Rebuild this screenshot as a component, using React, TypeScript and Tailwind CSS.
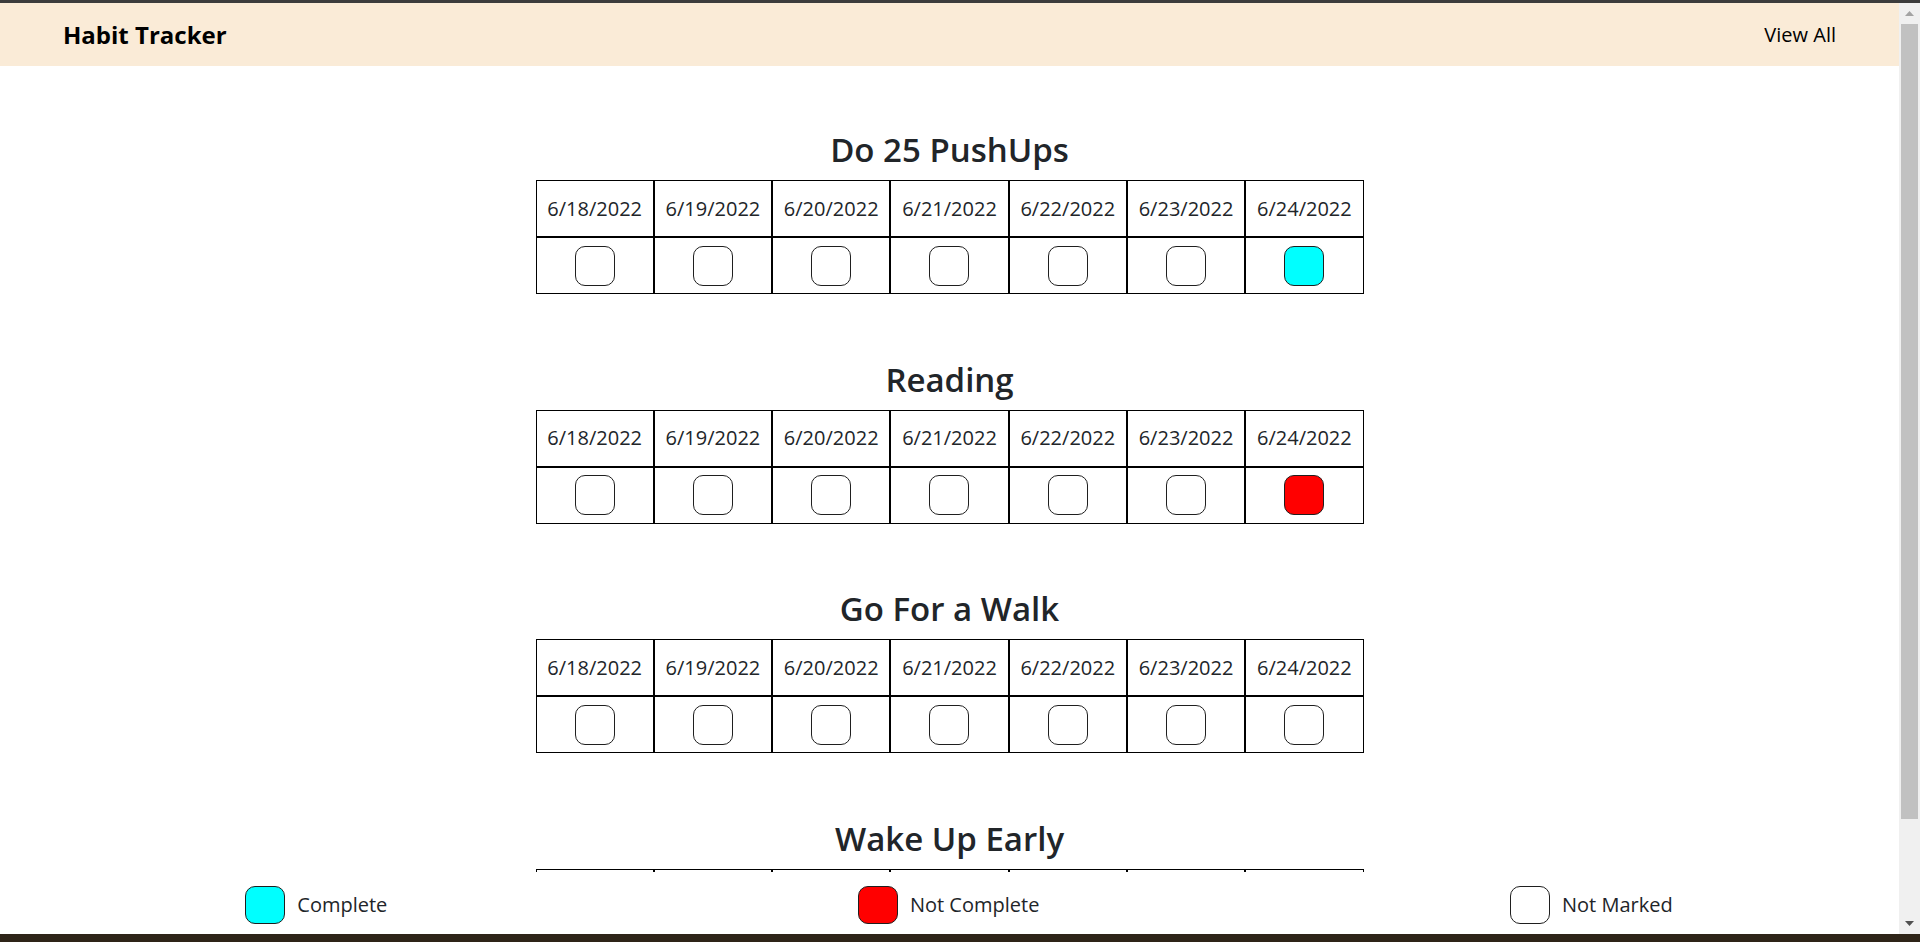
import React from "react";

type Mark = "done" | "missed" | "none";

const dates = ["6/18/2022", "6/19/2022", "6/20/2022", "6/21/2022", "6/22/2022", "6/23/2022", "6/24/2022"];

const habits: { name: string; marks: Mark[] }[] = [
  { name: "Do 25 PushUps", marks: ["none", "none", "none", "none", "none", "none", "done"] },
  { name: "Reading", marks: ["none", "none", "none", "none", "none", "none", "missed"] },
  { name: "Go For a Walk", marks: ["none", "none", "none", "none", "none", "none", "none"] },
  { name: "Wake Up Early", marks: ["none", "none", "none", "none", "none", "none", "none"] },
];

function StatusBox({ mark, legend }: { mark: Mark; legend?: boolean }) {
  const fill = mark === "done" ? "bg-[#00ffff]" : mark === "missed" ? "bg-[#ff0000]" : "bg-white";
  const size = legend ? "h-[38px] w-[40px]" : "mx-auto h-[40px] w-[40px]";
  return <span className={`block rounded-[10px] border border-[#1f1f1f] ${size} ${fill}`} />;
}

function HabitCard({ name, marks }: { name: string; marks: Mark[] }) {
  return (
    <section className="flex flex-col items-center">
      <h3 className="mb-[10px] pt-[1px] text-[33px] font-semibold leading-[41px] text-[#212529]">{name}</h3>
      <table className="w-[828px] table-fixed border-separate border-spacing-0">
        <thead>
          <tr>
            {dates.map((d) => (
              <th key={d} className="h-[57px] border border-black p-0 text-center align-middle text-[20px] font-normal leading-[30px] text-[#212529]">
                {d}
              </th>
            ))}
          </tr>
        </thead>
        <tbody>
          <tr>
            {marks.map((m, i) => (
              <td key={i} className="h-[57px] border border-black p-0 text-center align-middle">
                <StatusBox mark={m} />
              </td>
            ))}
          </tr>
        </tbody>
      </table>
    </section>
  );
}

function Scrollbar() {
  return (
    <div className="flex w-[21px] shrink-0 flex-col bg-[#f0f0f0]">
      <div className="flex h-[21px] items-center justify-center">
        <svg width="9" height="5" viewBox="0 0 9 5">
          <path d="M0 5 L4.5 0 L9 5 Z" fill="#a3a3a3" />
        </svg>
      </div>
      <div className="mx-[2px] h-[795px] bg-[#c1c1c1]" />
      <div className="flex-1" />
      <div className="flex h-[21px] items-center justify-center">
        <svg width="9" height="5" viewBox="0 0 9 5">
          <path d="M0 0 L9 0 L4.5 5 Z" fill="#505050" />
        </svg>
      </div>
    </div>
  );
}

export default function App() {
  const legend: { mark: Mark; label: string }[] = [
    { mark: "done", label: "Complete" },
    { mark: "missed", label: "Not Complete" },
    { mark: "none", label: "Not Marked" },
  ];

  return (
    <div className="flex h-[942px] flex-col overflow-hidden bg-white font-['Open_Sans',sans-serif]">
      <div className="h-[3px] shrink-0 bg-[#3c3c3c]" />
      <div className="flex min-h-0 flex-1">
        <div className="flex min-w-0 flex-1 flex-col">
          <header className="flex h-[63px] shrink-0 items-center justify-between bg-[#faebd7] px-[63px]">
            <span className="text-[24px] font-bold leading-[34px] text-black">Habit Tracker</span>
            <a className="text-[20px] leading-[30px] text-black">View All</a>
          </header>
          <main className="min-h-0 flex-1 overflow-hidden pt-[62px]">
            <div className="flex flex-col items-center gap-[63.5px]">
              {habits.map((h) => (
                <HabitCard key={h.name} name={h.name} marks={h.marks} />
              ))}
            </div>
          </main>
          <footer className="mr-[-9px] flex h-[62px] shrink-0 items-center justify-around bg-white pl-[10px] pt-[4px]">
            {legend.map((l) => (
              <div key={l.label} className="flex items-center gap-[12px]">
                <StatusBox mark={l.mark} legend />
                <span className="text-[20px] leading-[30px] text-[#212529]">{l.label}</span>
              </div>
            ))}
          </footer>
        </div>
        <Scrollbar />
      </div>
      <div className="h-[8px] shrink-0 bg-[#2e2418]" />
    </div>
  );
}
